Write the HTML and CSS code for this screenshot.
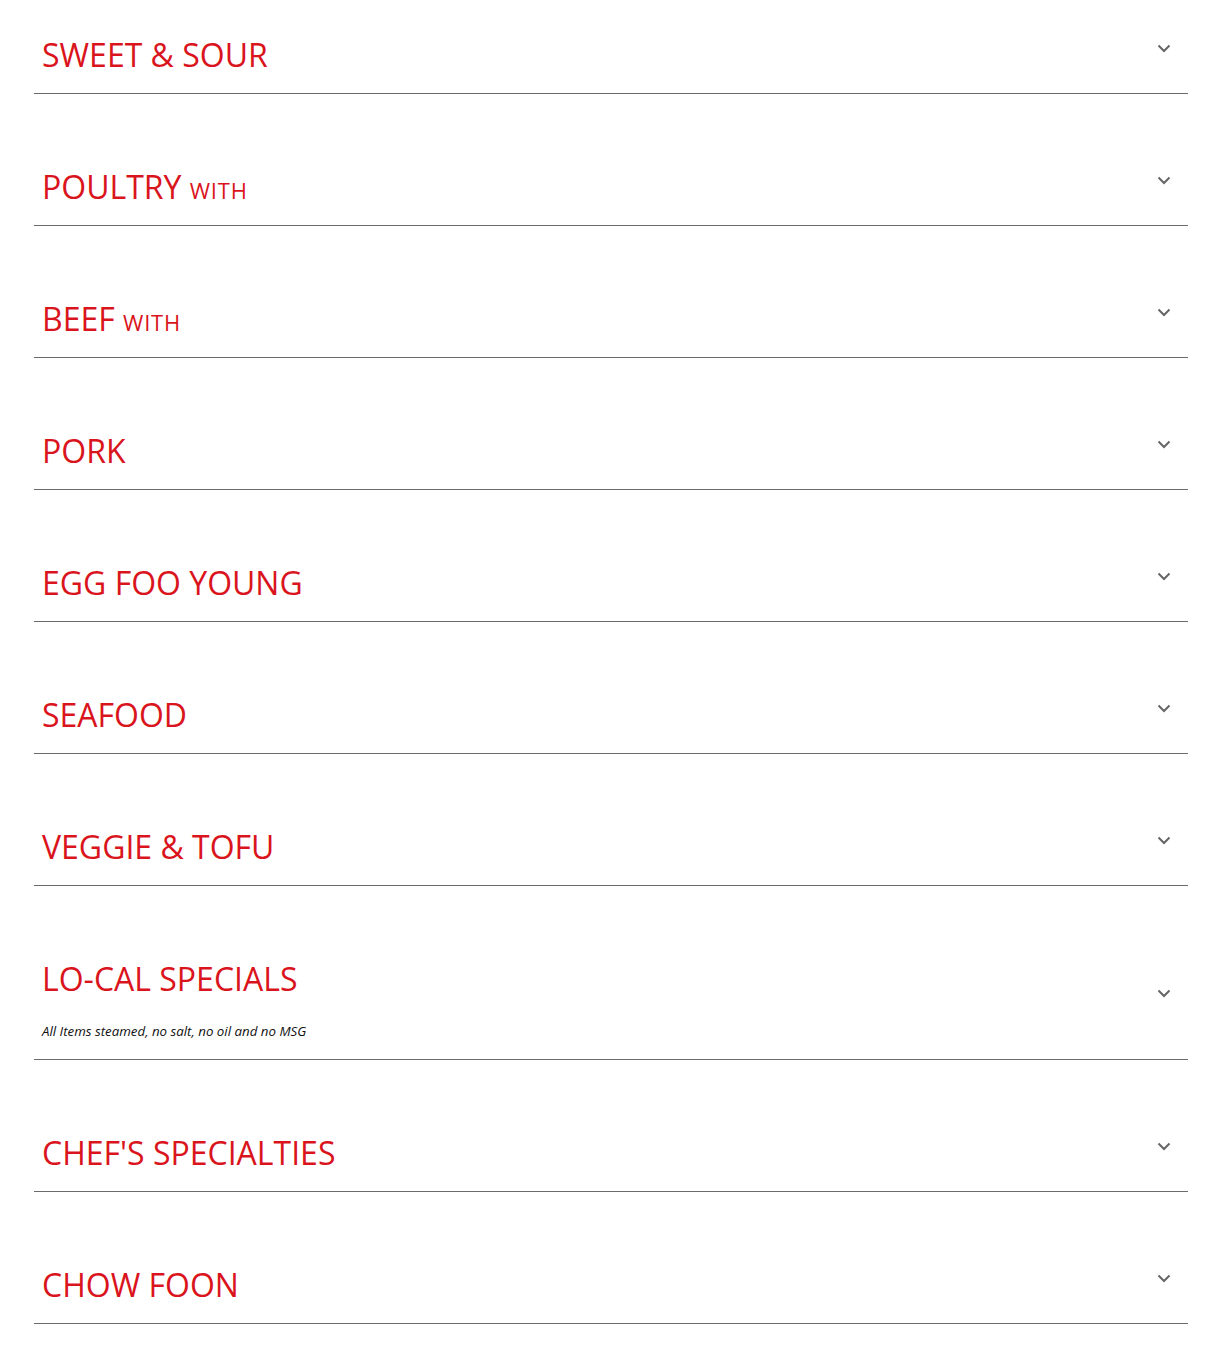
FILE: index.html
```html
<!DOCTYPE html>
<html lang="en">
<head>
<meta charset="utf-8">
<title>Menu</title>
<link rel="stylesheet" href="styles.css">
</head>
<body>
<div class="menu">
  <div class="cat"><div class="info"><h2 class="title">SWEET &amp; SOUR</h2></div><svg class="chev" viewBox="0 0 14 9"><path d="M1.5 1.5l5.5 5.5 5.5-5.5"/></svg></div>
  <div class="cat"><div class="info"><h2 class="title">POULTRY <span class="small">WITH</span></h2></div><svg class="chev" viewBox="0 0 14 9"><path d="M1.5 1.5l5.5 5.5 5.5-5.5"/></svg></div>
  <div class="cat"><div class="info"><h2 class="title">BEEF <span class="small">WITH</span></h2></div><svg class="chev" viewBox="0 0 14 9"><path d="M1.5 1.5l5.5 5.5 5.5-5.5"/></svg></div>
  <div class="cat"><div class="info"><h2 class="title">PORK</h2></div><svg class="chev" viewBox="0 0 14 9"><path d="M1.5 1.5l5.5 5.5 5.5-5.5"/></svg></div>
  <div class="cat"><div class="info"><h2 class="title">EGG FOO YOUNG</h2></div><svg class="chev" viewBox="0 0 14 9"><path d="M1.5 1.5l5.5 5.5 5.5-5.5"/></svg></div>
  <div class="cat"><div class="info"><h2 class="title">SEAFOOD</h2></div><svg class="chev" viewBox="0 0 14 9"><path d="M1.5 1.5l5.5 5.5 5.5-5.5"/></svg></div>
  <div class="cat"><div class="info"><h2 class="title">VEGGIE &amp; TOFU</h2></div><svg class="chev" viewBox="0 0 14 9"><path d="M1.5 1.5l5.5 5.5 5.5-5.5"/></svg></div>
  <div class="cat"><div class="info"><h2 class="title">LO-CAL SPECIALS</h2><p class="note">All Items steamed, no salt, no oil and no MSG</p></div><svg class="chev" viewBox="0 0 14 9"><path d="M1.5 1.5l5.5 5.5 5.5-5.5"/></svg></div>
  <div class="cat"><div class="info"><h2 class="title">CHEF'S SPECIALTIES</h2></div><svg class="chev" viewBox="0 0 14 9"><path d="M1.5 1.5l5.5 5.5 5.5-5.5"/></svg></div>
  <div class="cat"><div class="info"><h2 class="title">CHOW FOON</h2></div><svg class="chev" viewBox="0 0 14 9"><path d="M1.5 1.5l5.5 5.5 5.5-5.5"/></svg></div>
</div>
</body>
</html>
```
FILE: styles.css
```css
html, body {
  margin: 0;
  padding: 0;
  background: #ffffff;
}
body {
  font-family: "Open Sans", "Liberation Sans", sans-serif;
}
.menu {
  display: flex;
  flex-direction: column;
  gap: 43px;
  padding: 5px 34px 0 34px;
}
.cat {
  display: flex;
  align-items: center;
  justify-content: space-between;
  padding: 0 17px 0 8px;
  border-bottom: 1px solid #6b6b6b;
}
.info {
  display: flex;
  flex-direction: column;
  padding: 31px 0 19px 0;
}
.title {
  margin: 0;
  height: 38px;
  font-size: 32px;
  line-height: 38px;
  font-weight: 400;
  color: #da141c;
  white-space: nowrap;
}
.small {
  font-size: 22px;
  line-height: 1;
  letter-spacing: 0.8px;
}
.note {
  margin: 24px 0 0 0;
  font-size: 13.3px;
  line-height: 18px;
  font-style: italic;
  color: #111111;
}
.chev {
  width: 14px;
  height: 9px;
  fill: none;
  stroke: #666666;
  stroke-width: 2;
  margin-bottom: 2px;
}
```
